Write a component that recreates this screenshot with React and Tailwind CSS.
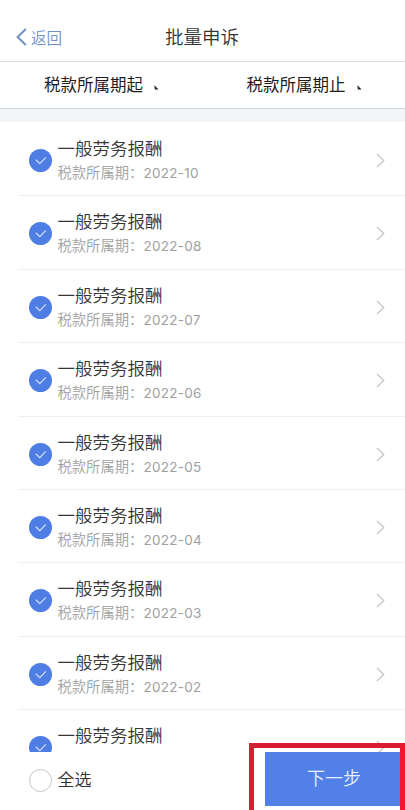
import React, { useState } from 'react';

const initialRecords = [
  { id: 1, title: '一般劳务报酬', period: '2022-10' },
  { id: 2, title: '一般劳务报酬', period: '2022-08' },
  { id: 3, title: '一般劳务报酬', period: '2022-07' },
  { id: 4, title: '一般劳务报酬', period: '2022-06' },
  { id: 5, title: '一般劳务报酬', period: '2022-05' },
  { id: 6, title: '一般劳务报酬', period: '2022-04' },
  { id: 7, title: '一般劳务报酬', period: '2022-03' },
  { id: 8, title: '一般劳务报酬', period: '2022-02' },
  { id: 9, title: '一般劳务报酬' },
];

const CheckCircle = ({ checked }) => {
  if (!checked) {
    return <span className="block w-[23px] h-[23px] shrink-0 rounded-full border border-[#c4c4c4] bg-white" />;
  }

  return (
    <span className="flex w-[23px] h-[23px] shrink-0 items-center justify-center rounded-full bg-[#4e7de4]">
      <svg className="w-[23px] h-[23px]" viewBox="0 0 23 23" fill="none" stroke="#d0defb" strokeWidth="1.3">
        <path d="M6.8 10.8l4 3.8 6-6.2" />
      </svg>
    </span>
  );
};

const FilterButton = ({ label }) => (
  <button className="flex flex-1 items-center pb-0.5 pl-[44px] text-[16.5px] leading-6 font-normal text-[#1c1c1c]">
    {label}
    <svg className="ml-[11px] mt-[7px] w-[5px] h-[5px]" viewBox="0 0 5 5" fill="#222">
      <path d="M0.4 0.2L4.6 4.4H0.8z" />
    </svg>
  </button>
);

const RecordRow = ({ record, checked, onToggle }) => (
  <div className="flex h-[73.4px] shrink-0 pl-[18px]">
    <div className="flex flex-1 border-b border-[#f0f0f0] pl-[10.5px] pr-5">
      <button className="mt-[26px] h-[23px]" onClick={() => onToggle(record.id)}>
        <CheckCircle checked={checked} />
      </button>
      <div className="ml-[6px] mt-[12px] flex-1">
        <div className="text-[17.5px] leading-[26px] text-[#363636]">{record.title}</div>
        {record.period && (
          <div className="flex text-[14.3px] leading-[22px] text-[#a0a0a0]">
            <span className="w-[86px]">税款所属期：</span>
            <span className="pt-px font-['Inter','Noto_Sans_CJK_SC',sans-serif] text-[13.5px] font-normal tracking-[0.25px]">{record.period}</span>
          </div>
        )}
      </div>
      <svg className="mt-[30px] w-[9px] h-[15px]" viewBox="0 0 9 15" fill="none" stroke="#c8c8c8" strokeWidth="1.4">
        <path d="M1 1l6.7 6.5L1 14" />
      </svg>
    </div>
  </div>
);

const App = () => {
  const [selected, setSelected] = useState(initialRecords.map((record) => record.id));
  const [allSelected, setAllSelected] = useState(false);

  const handleToggle = (id) => {
    setSelected((prev) => (prev.includes(id) ? prev.filter((item) => item !== id) : [...prev, id]));
  };

  const handleSelectAll = () => {
    setSelected(allSelected ? [] : initialRecords.map((record) => record.id));
    setAllSelected(!allSelected);
  };

  return (
    <div className="relative flex h-[810px] w-[405px] flex-col overflow-hidden bg-white font-['Noto_Sans_CJK_SC',sans-serif] font-[350]">
      {/* Header */}
      <div className="grid h-[62px] shrink-0 grid-cols-[1fr_auto_1fr] items-end border-b border-[#dcdcdc] pb-[10px]">
        <button className="flex items-center pl-4 text-[15.5px] leading-7 text-[#7090c6]">
          <svg className="mr-[4px] w-[11px] h-[18px]" viewBox="0 0 11 18" fill="none" stroke="currentColor" strokeWidth="2">
            <path d="M9.8 1L1.6 9l8.2 8" />
          </svg>
          返回
        </button>
        <h1 className="mb-px -ml-px text-[18.5px] leading-7 font-[350] text-[#333]">批量申诉</h1>
        <span />
      </div>

      {/* Period filters */}
      <div className="flex h-[47px] shrink-0 border-b border-[#d2d4d6]">
        <FilterButton label="税款所属期起" />
        <FilterButton label="税款所属期止" />
      </div>
      <div className="h-[13px] shrink-0 bg-[#f3f6f9]" />

      {/* Records */}
      <div className="flex h-[630px] shrink-0 flex-col overflow-hidden pt-px">
        {initialRecords.map((record) => (
          <RecordRow
            key={record.id}
            record={record}
            checked={selected.includes(record.id)}
            onToggle={handleToggle}
          />
        ))}
      </div>

      {/* Bottom bar */}
      <div className="flex h-[58px] shrink-0 items-start justify-between pl-[28.5px] pr-[5px]">
        <button className="mt-4 flex items-center text-[17px] leading-[26px] text-[#333]" onClick={handleSelectAll}>
          <CheckCircle checked={allSelected} />
          <span className="ml-[6px] -mt-0.5">全选</span>
        </button>
        <button className="h-[54px] w-[135px] bg-[#5180e7] pl-[3px] pb-1 text-[18px] text-[#e8effd]">下一步</button>
      </div>

      {/* Highlight frame around the next button */}
      <div className="pointer-events-none absolute bottom-0 right-0 h-[67px] w-[156px] border-x-[5px] border-t-[5px] border-[#d91c30] border-r-[#f21430]" />
    </div>
  );
};

export default App;
